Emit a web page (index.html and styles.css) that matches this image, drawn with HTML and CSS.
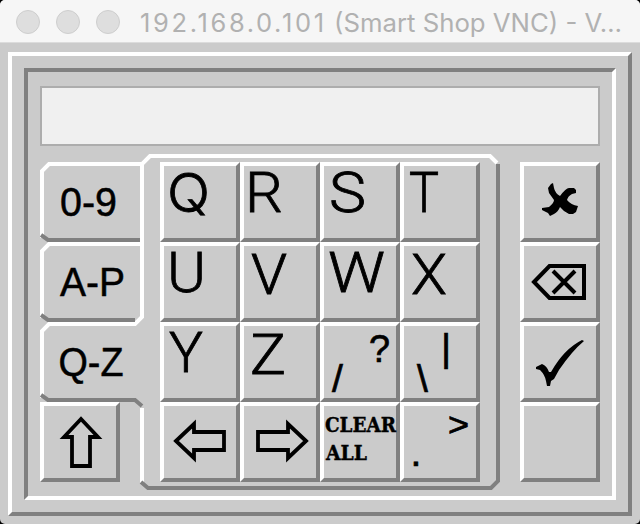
FILE: index.html
```html
<!DOCTYPE html>
<html lang="en">
<head>
<meta charset="utf-8">
<title>Smart Shop VNC</title>
<link rel="stylesheet" href="styles.css">
</head>
<body>
<div class="window">
  <header class="titlebar">
    <span class="dot"></span><span class="dot"></span><span class="dot"></span>
    <svg class="title" width="500" height="42"><text x="3" y="32" textLength="184" lengthAdjust="spacing">192.168.0.101</text><text x="197" y="32" textLength="288" lengthAdjust="spacingAndGlyphs">(Smart Shop VNC) - V…</text></svg>
  </header>
  <main class="screen">
    <div class="outer">
      <div class="inner">
        <div class="field"></div>
        <div class="keyboard">
          <svg class="frame" width="460" height="336" viewBox="0 0 460 336">
            <g class="light">
              <path d="M2 84V17L9 10H101M2 164V97L9 90H101M2 244V177L9 170H95L102 163V10L110 2H450L457 9M102 254V330"/>
            </g>
            <g class="dark">
              <path d="M1 81L8 86H100M1 161L8 166H95M1 241L8 246H95L102 252M101 328L108 334H451L458 327V10"/>
            </g>
          </svg>
          <div class="tabs">
            <div class="tab"><svg width="100" height="80"><text x="20" y="54" textLength="57" lengthAdjust="spacingAndGlyphs">0-9</text></svg></div>
            <div class="tab"><svg width="100" height="80"><text x="20" y="54" textLength="65" lengthAdjust="spacingAndGlyphs">A-P</text></svg></div>
            <div class="tab"><svg width="100" height="80"><text x="18.500" y="54" textLength="65" lengthAdjust="spacingAndGlyphs">Q-Z</text></svg></div>
            <div class="key"><svg viewBox="0 0 80 80"><path class="line" d="M41 17L24 35H32V64H50V35H58Z"/></svg></div>
          </div>
          <div class="keys">
            <div class="key"><svg viewBox="0 0 80 80"><text class="tail" x="7" y="50" textLength="43" lengthAdjust="spacingAndGlyphs">Q</text></svg></div>
            <div class="key"><svg viewBox="0 0 80 80"><text x="5" y="50" textLength="38" lengthAdjust="spacingAndGlyphs">R</text></svg></div>
            <div class="key"><svg viewBox="0 0 80 80"><text x="9" y="50" textLength="37" lengthAdjust="spacingAndGlyphs">S</text></svg></div>
            <div class="key"><svg viewBox="0 0 80 80"><text x="9" y="50" textLength="30" lengthAdjust="spacingAndGlyphs">T</text></svg></div>
            <div class="key"><svg viewBox="0 0 80 80"><text x="7" y="50" textLength="39" lengthAdjust="spacingAndGlyphs">U</text></svg></div>
            <div class="key"><svg viewBox="0 0 80 80"><text x="11" y="52" textLength="36" lengthAdjust="spacingAndGlyphs">V</text></svg></div>
            <div class="key"><svg viewBox="0 0 80 80"><text x="8" y="50" textLength="57" lengthAdjust="spacingAndGlyphs">W</text></svg></div>
            <div class="key"><svg viewBox="0 0 80 80"><text x="11" y="52" textLength="36" lengthAdjust="spacingAndGlyphs">X</text></svg></div>
            <div class="key"><svg viewBox="0 0 80 80"><text x="9" y="50" textLength="34" lengthAdjust="spacingAndGlyphs">Y</text></svg></div>
            <div class="key"><svg viewBox="0 0 80 80"><text x="10" y="52" textLength="36" lengthAdjust="spacingAndGlyphs">Z</text></svg></div>
            <div class="key"><svg viewBox="0 0 80 80"><text class="sub" x="12" y="70">/</text><text class="sub" x="49" y="40" textLength="21" lengthAdjust="spacingAndGlyphs">?</text></svg></div>
            <div class="key"><svg viewBox="0 0 80 80"><text class="sub" x="17" y="70">\</text><text class="sub" x="41" y="39">|</text></svg></div>
            <div class="key"><svg viewBox="0 0 80 80"><path class="line" d="M16 39L34 22V30H64V48H34V56Z"/></svg></div>
            <div class="key"><svg viewBox="0 0 80 80"><path class="line" d="M66 39L48 22V30H18V48H48V56Z"/></svg></div>
            <div class="key"><svg viewBox="0 0 80 80"><text class="word" x="5" y="30" textLength="71" lengthAdjust="spacingAndGlyphs">CLEAR</text><text class="word" x="6" y="58" textLength="41" lengthAdjust="spacingAndGlyphs">ALL</text></svg></div>
            <div class="key"><svg viewBox="0 0 80 80"><text class="sub" x="10.500" y="64">.</text><text class="more" x="48" y="34" textLength="21" lengthAdjust="spacingAndGlyphs">&gt;</text></svg></div>
          </div>
          <div class="actions">
            <div class="key"><svg viewBox="0 0 80 80"><path d="M33 21L34 26Q35 31 40 34Q46 26 49 26H54L56 28V31L52 32Q48 34 47 38Q51 43 58 44L56 50L53 52H49Q44 50 40 45Q38 50 34 52L30 54L28 51L22 48V46L29 45Q34 41 34 38L29 31L28 26L31 22Z"/></svg></div>
            <div class="key"><svg viewBox="0 0 80 80"><path class="thick" d="M14 40L29.500 24H64V56H29.500Z"/><path class="cross" d="M33 29L55 51M55 29L33 51"/></svg></div>
            <div class="key"><svg viewBox="0 0 80 80"><path d="M16 45L22 42Q27 44 29 50H31Q44 27 62 18L64 19Q52 29 39 48L34 57L31 59L30 64L27 64L26 59Q25 53 20 48L16 47Z"/></svg></div>
            <div class="key"></div>
          </div>
        </div>
      </div>
    </div>
  </main>
</div>
</body>
</html>
```
FILE: styles.css
```css
* { box-sizing: border-box; }
body { margin: 0; background: #000; font-family: "Liberation Sans", Arial, sans-serif; }
.window { width: 640px; height: 524px; border-radius: 5px; overflow: hidden; background: #cbcbcb; }
.titlebar { height: 43px; background: #f6f6f6; border-bottom: 1px solid #dcdcdc; display: flex; align-items: center; gap: 16px; padding: 0 0 0 16px; }
.dot { width: 24px; height: 24px; flex: none; border-radius: 50%; background: #dedede; border: 1px solid #cecece; margin-top: 2px; }
.title { flex: none; margin-left: 1px; font-family: Inter, sans-serif; font-size: 25.5px; fill: #b1b1b1; }
.screen { padding: 9px 8px 8px; }
.outer { height: 464px; padding: 12px; border: 4px solid; border-color: #fff #808080 #808080 #fff; }
.inner { height: 432px; padding: 14px 12px 6px; border: 4px solid; border-color: #808080 #fff #fff #808080; }
.field { height: 60px; margin-bottom: 8px; background: #f0f0f0; border: 2px solid #adadad; }
.keyboard { display: grid; grid-template-columns: 100px 360px 80px; grid-template-rows: 336px; }
.frame { grid-area: 1 / 1 / 2 / 3; fill: none; stroke-width: 4; }
.light { stroke: #fff; }
.dark { stroke: #808080; }
.tabs { grid-area: 1 / 1 / 2 / 2; padding-top: 8px; font-size: 40px; }
.tab { height: 80px; }
.tab svg { display: block; stroke: #000; stroke-width: .5; }
.keys { grid-area: 1 / 2 / 2 / 3; display: grid; grid-template-columns: repeat(4, 80px); grid-template-rows: repeat(4, 80px); padding: 8px 20px; }
.actions { grid-area: 1 / 3 / 2 / 4; padding-top: 8px; margin-left: 20px; width: 80px; }
.key { width: 80px; height: 80px; border: 4px solid; border-color: #fff #808080 #808080 #fff; }
.key svg { display: block; width: 80px; height: 80px; margin: -4px; overflow: visible; }
.keys text { font-family: Roboto, sans-serif; font-weight: 300; font-size: 56px; stroke: #000; stroke-width: .8; }
.keys .tail { font-family: Inter, sans-serif; font-size: 54px; }
.keys .sub { font-family: "Liberation Sans", sans-serif; font-weight: 400; font-size: 39px; stroke-width: .7; }
.keys .more { font-family: "Liberation Sans", sans-serif; font-weight: 400; font-size: 34px; }
.keys .word { font-family: "DejaVu Serif", serif; font-weight: 700; font-size: 19.5px; stroke-width: .4; }
.line { fill: none; stroke: #000; stroke-width: 3.8; }
.thick { fill: none; stroke: #000; stroke-width: 4; }
.cross { fill: none; stroke: #000; stroke-width: 4; }
```
